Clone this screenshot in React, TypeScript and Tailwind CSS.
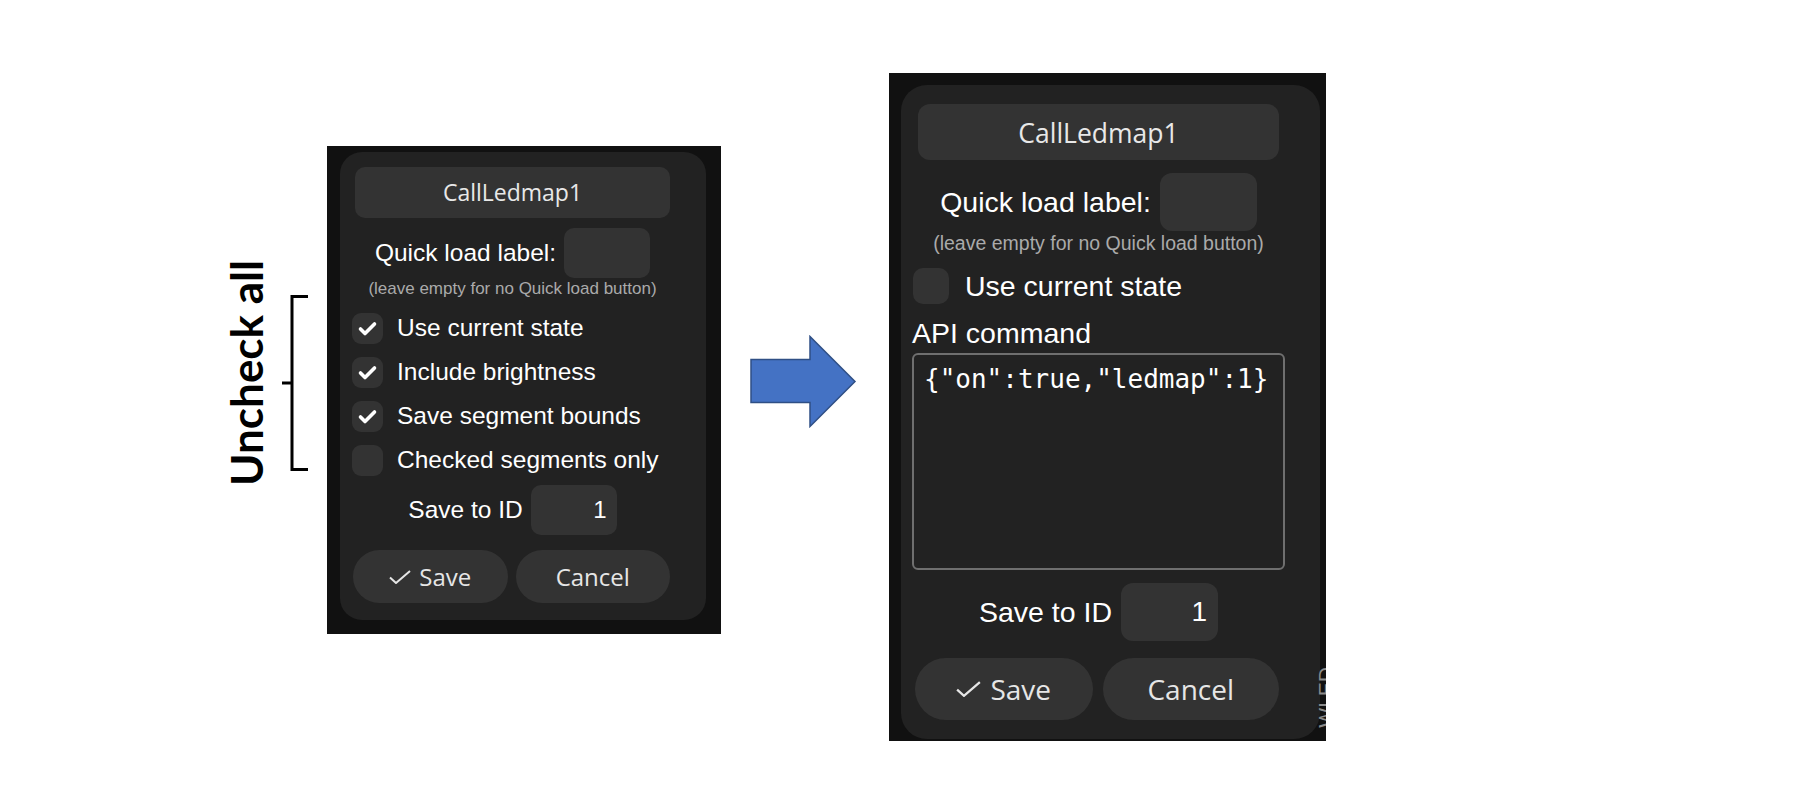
import React from 'react';

const sans = "font-['Liberation_Sans',Arial,sans-serif]";
const ui = "font-['Open_Sans','Noto_Sans',sans-serif]";

function Tick({ size = 31 }: { size?: number }) {
  return (
    <svg width={size} height={size} viewBox="0 0 31 31" fill="none">
      <polyline points="8.5,16 13,20.5 22.5,11" stroke="#fff" strokeWidth="3.6" strokeLinecap="round" strokeLinejoin="round" />
    </svg>
  );
}

function SaveTick({ w, h }: { w: number; h: number }) {
  return (
    <svg width={w} height={h} viewBox="0 0 22 14" fill="none">
      <polyline points="1,7.5 7,13 21,1" stroke="#e6e6e6" strokeWidth="2" strokeLinejoin="miter" />
    </svg>
  );
}

function LeftPanel() {
  const rows = [
    { label: 'Use current state', on: true },
    { label: 'Include brightness', on: true },
    { label: 'Save segment bounds', on: true },
    { label: 'Checked segments only', on: false },
  ];
  return (
    <div className="ml-[18px] mt-[146px] h-[488px] w-[394px] shrink-0 bg-[#111] pl-[13px] pt-[6px]">
      <div className="h-[468px] w-[366px] rounded-[22px] bg-[#222] pl-[15px] pt-[15px]">
        <div className="flex w-[315px] flex-col">
          <div className={`flex h-[51px] items-center justify-center rounded-[10px] bg-[#333] text-[23px] text-[#e8e8e8] ${ui}`}>
            CallLedmap1
          </div>
          <div className="mt-[10px] flex items-center justify-center gap-[8px]">
            <span className={`text-[24.5px] text-white ${sans}`}>Quick load label:</span>
            <div className="h-[50px] w-[86px] rounded-[10px] bg-[#333]" />
          </div>
          <div className={`mt-[1px] whitespace-nowrap text-center text-[17px] leading-[20px] text-[#aaa] ${sans}`}>
            (leave empty for no Quick load button)
          </div>
          <div className="ml-[-3px] mt-[7px] flex flex-col">
            {rows.map((r) => (
              <div key={r.label} className="flex h-[44px] items-center gap-[14px]">
                <div className="flex h-[31px] w-[31px] items-center justify-center rounded-[9px] bg-[#333]">
                  {r.on && <Tick />}
                </div>
                <span className={`text-[24.5px] text-white ${sans}`}>{r.label}</span>
              </div>
            ))}
          </div>
          <div className="mt-[3px] flex items-center justify-center gap-[8px]">
            <span className={`text-[24.5px] text-white ${sans}`}>Save to ID</span>
            <div className={`flex h-[50px] w-[86px] items-center justify-end rounded-[10px] bg-[#333] pr-[10px] text-[24px] text-white ${sans}`}>
              1
            </div>
          </div>
          <div className="ml-[-2px] mt-[15px] flex gap-[8px]">
            <div className={`flex h-[53px] w-[156px] items-center justify-center gap-[8px] rounded-full bg-[#333] text-[24px] text-[#e6e6e6] ${ui}`}>
              <SaveTick w={22} h={14} />
              <span>Save</span>
            </div>
            <div className={`flex h-[53px] w-[156px] items-center justify-center rounded-full bg-[#333] text-[24px] text-[#e6e6e6] ${ui}`}>
              Cancel
            </div>
          </div>
        </div>
      </div>
    </div>
  );
}

function RightPanel() {
  return (
    <div className="relative ml-[31px] mt-[73px] h-[668px] w-[437px] shrink-0 overflow-hidden bg-[#111] pl-[12px] pt-[12px]">
      <div className="h-[654px] w-[419px] rounded-[26px] bg-[#222] pl-[17px] pt-[19px]">
        <div className="flex w-[361px] flex-col">
          <div className={`flex h-[56px] items-center justify-center rounded-[12px] bg-[#333] pt-[4px] text-[26.5px] text-[#e8e8e8] ${ui}`}>
            CallLedmap1
          </div>
          <div className="mt-[13px] flex items-center justify-center gap-[9px]">
            <span className={`text-[28.5px] text-white ${sans}`}>Quick load label:</span>
            <div className="h-[58px] w-[97px] rounded-[12px] bg-[#333]" />
          </div>
          <div className={`mt-[1px] whitespace-nowrap text-center text-[19.5px] leading-[22px] text-[#aaa] ${sans}`}>
            (leave empty for no Quick load button)
          </div>
          <div className="ml-[-5px] mt-[10px] flex h-[44px] items-center gap-[16px]">
            <div className="h-[36px] w-[36px] rounded-[10px] bg-[#333]" />
            <span className={`text-[28.5px] text-white ${sans}`}>Use current state</span>
          </div>
          <div className={`ml-[-6px] mt-[9px] text-[28.5px] leading-[32px] text-white ${sans}`}>API command</div>
          <div className="ml-[-6px] mt-[4px] h-[217px] w-[373px] rounded-[6px] border-2 border-[#6f6f6f] bg-[#222] px-[10px] pt-[9px]">
            <span className="font-['DejaVu_Sans_Mono','Liberation_Mono',monospace] text-[26px] leading-[30px] text-white">
              {'{"on":true,"ledmap":1}'}
            </span>
          </div>
          <div className="mt-[13px] flex items-center justify-center gap-[9px]">
            <span className={`text-[28.5px] text-white ${sans}`}>Save to ID</span>
            <div className={`flex h-[58px] w-[97px] items-center justify-end rounded-[12px] bg-[#333] pr-[11px] text-[28px] text-white ${sans}`}>
              1
            </div>
          </div>
          <div className="ml-[-3px] mt-[17px] flex gap-[10px]">
            <div className={`flex h-[62px] w-[179px] items-center justify-center gap-[9px] rounded-full bg-[#333] text-[28px] text-[#e6e6e6] ${ui}`}>
              <SaveTick w={25} h={16} />
              <span>Save</span>
            </div>
            <div className={`flex h-[62px] w-[178px] items-center justify-center rounded-full bg-[#333] text-[28px] text-[#e6e6e6] ${ui}`}>
              Cancel
            </div>
          </div>
        </div>
      </div>
      <div className={`absolute left-[426px] top-[594px] rotate-180 text-[21px] leading-none text-[#8a8a8a] [writing-mode:vertical-rl] ${sans}`}>
        WLED
      </div>
    </div>
  );
}

export default function App() {
  return (
    <div className="flex h-[798px] w-full items-start overflow-hidden bg-white pl-[226px]">
      <div className="mt-[260px] flex w-[40px] justify-center">
        <span className="rotate-180 font-['Lato','Liberation_Sans',sans-serif] text-[44px] font-bold leading-none text-black [writing-mode:vertical-rl]">
          Uncheck all
        </span>
      </div>
      <svg className="ml-[15px] mt-[294px] shrink-0" width="28" height="178" viewBox="0 0 28 178" fill="none">
        <path d="M27 2.5 H11 V89 H1 M11 89 V175.5 H27" stroke="#000" strokeWidth="3" />
      </svg>
      <LeftPanel />
      <svg className="ml-[29px] mt-[335px] shrink-0" width="108" height="94" viewBox="0 0 108 94" fill="none">
        <polygon points="1,24.5 60,24.5 60,1.5 105,46.5 60,91.5 60,67.5 1,67.5" fill="#4472C4" stroke="#2F4F85" strokeWidth="1.5" />
      </svg>
      <RightPanel />
    </div>
  );
}
